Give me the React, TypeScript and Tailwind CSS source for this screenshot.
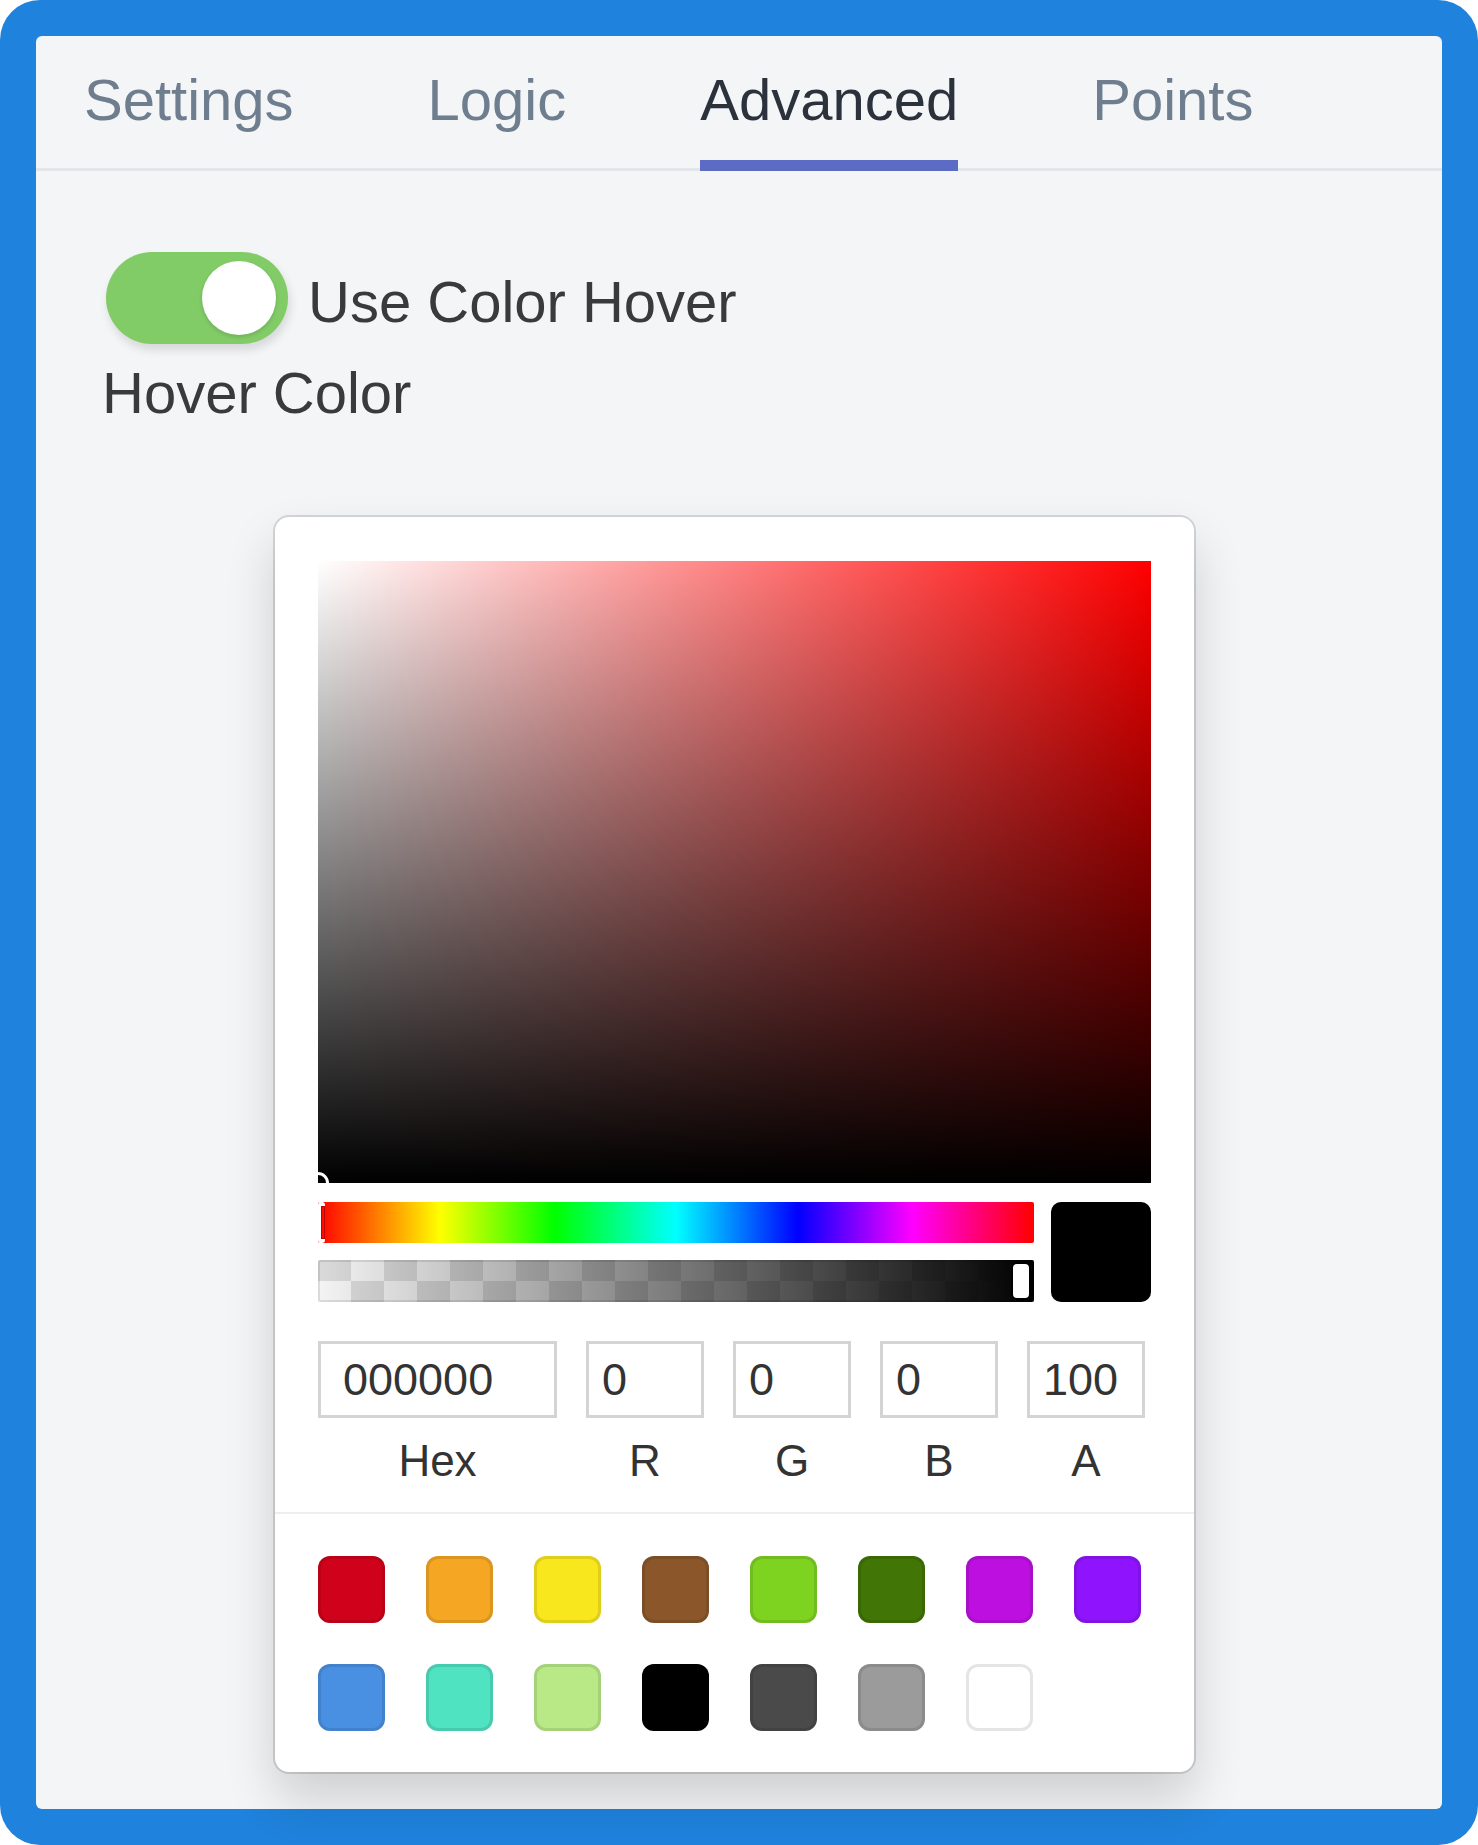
import React, { useState } from 'react';

const tabs = ['Settings', 'Logic', 'Advanced', 'Points'];

const presetColors = [
  '#D0021B', '#F5A623', '#F8E71C', '#8B572A', '#7ED321', '#417505', '#BD10E0', '#9013FE',
  '#4A90E2', '#50E3C2', '#B8E986', '#000000', '#4A4A4A', '#9B9B9B', '#FFFFFF',
];

const fields = [
  { label: 'Hex', value: '000000', wide: true },
  { label: 'R', value: '0', wide: false },
  { label: 'G', value: '0', wide: false },
  { label: 'B', value: '0', wide: false },
  { label: 'A', value: '100', wide: false },
];

const ColorPicker: React.FC = () => (
  <div className="mt-[91px] ml-[169px] w-[919px] bg-white rounded-[14px] shadow-[0_0_0_2px_rgba(0,0,0,0.13),0_26px_50px_rgba(0,0,0,0.16)] flex flex-col">
    <div className="px-[43px] pt-[44px]">
      {/* saturation */}
      <div className="relative h-[622px] bg-[#ff0000] overflow-hidden">
        <div className="absolute inset-0 bg-[linear-gradient(to_right,#ffffff,rgba(255,255,255,0))]" />
        <div className="absolute inset-0 bg-[linear-gradient(to_top,#000000,rgba(0,0,0,0))]" />
        <div className="absolute -left-[11px] -bottom-[11px] w-[22px] h-[22px] rounded-full border-[3px] border-white shadow-[0_0_2px_rgba(0,0,0,0.6)]" />
      </div>

      {/* hue / alpha / preview */}
      <div className="flex gap-[17px] mt-[19px]">
        <div className="flex-1 flex flex-col">
          <div className="relative h-[41px] rounded-[2px] bg-[linear-gradient(to_right,#ff0000_0%,#ffff00_17%,#00ff00_33%,#00ffff_50%,#0000ff_67%,#ff00ff_83%,#ff0000_100%)]">
            <div className="absolute left-0 top-0 w-[7px] h-full border-y-[4px] border-l-[3px] border-white rounded-[3px] shadow-[inset_0_0_0_1px_rgba(120,0,0,0.5)]" />
          </div>
          <div className="relative h-[42px] mt-[17px] rounded-[2px] overflow-hidden bg-[conic-gradient(#f4f4f4_25%,#dadada_0_50%,#f4f4f4_0_75%,#dadada_0)] bg-size-[66px_42px]">
            <div className="absolute inset-0 bg-[linear-gradient(to_right,rgba(0,0,0,0),#000000)] shadow-[inset_0_0_0_2px_rgba(0,0,0,0.1)]" />
            <div className="absolute right-[5px] top-[4px] w-[16px] h-[34px] rounded-[4px] bg-white shadow-[0_0_0_2px_rgba(0,0,0,0.8)]" />
          </div>
        </div>
        <div className="w-[100px] h-[100px] rounded-[10px] bg-black shadow-[inset_0_0_0_2px_rgba(0,0,0,0.15)]" />
      </div>

      {/* fields */}
      <div className="flex gap-[29px] mt-[39px] pb-[26px]">
        {fields.map((f) => (
          <div key={f.label} className="flex flex-col items-center">
            <input
              readOnly
              value={f.value}
              className={`${f.wide ? 'w-[239px] pl-[22px]' : 'w-[118px] pl-[13px]'} h-[77px] bg-white border-[3px] border-[#d4d4d4] text-[45px] text-[#333333] outline-none`}
              style={{ fontFamily: '"Liberation Sans", Arial, sans-serif' }}
            />
            <span className="mt-[17px] text-[44px] leading-[51px] text-[#333333]">{f.label}</span>
          </div>
        ))}
      </div>
    </div>

    {/* presets */}
    <div className="border-t-2 border-[#eeeeee] pt-[42px] pb-[41px] pl-[43px] pr-[40px] flex flex-wrap gap-[41px]">
      {presetColors.map((c) => (
        <div
          key={c}
          className="w-[67px] h-[67px] rounded-[12px] shadow-[inset_0_0_0_3px_rgba(0,0,0,0.1)]"
          style={{ backgroundColor: c }}
        />
      ))}
    </div>
  </div>
);

const App: React.FC = () => {
  const [active, setActive] = useState('Advanced');
  const [hover, setHover] = useState(true);

  return (
    <div
      className="w-[1478px] h-[1845px] bg-white"
      style={{ fontFamily: '"Liberation Sans", Arial, sans-serif' }}
    >
      <div className="w-full h-full bg-[#1f82dc] rounded-[40px] p-[36px] flex">
        <div className="flex-1 bg-[#f4f5f7] rounded-[6px] flex flex-col">
          {/* tabs */}
          <div className="flex pl-[48px] gap-[134px] border-b-[3px] border-[#e2e6eb]">
            {tabs.map((t) => (
              <button
                key={t}
                onClick={() => setActive(t)}
                className={`pt-[31px] pb-[27px] -mb-[3px] border-b-[11px] text-[58px] leading-[66px] ${
                  active === t ? 'border-[#5c6bc4] text-[#2b323c]' : 'border-transparent text-[#6e7e8f]'
                }`}
              >
                {t}
              </button>
            ))}
          </div>

          <div className="px-[70px] pt-[81px] flex flex-col items-start">
            <div className="flex items-center gap-[20px]">
              <button
                onClick={() => setHover(!hover)}
                className={`relative w-[182px] h-[92px] rounded-full shadow-[2px_6px_10px_rgba(0,0,0,0.12)] ${hover ? 'bg-[#82cc68]' : 'bg-[#cccccc]'}`}
              >
                <span
                  className={`absolute top-[9px] w-[74px] h-[74px] rounded-full bg-white shadow-[0_2px_4px_rgba(0,0,0,0.15)] ${hover ? 'right-[12px]' : 'left-[12px]'}`}
                />
              </button>
              <span className="pt-[8px] text-[58px] leading-[66px] text-[#3a3a3a]">Use Color Hover</span>
            </div>
            <div className="mt-[16px] -ml-[4px] text-[58px] leading-[66px] text-[#3a3a3a]">Hover Color</div>

            <ColorPicker />
          </div>
        </div>
      </div>
    </div>
  );
};

export default App;
